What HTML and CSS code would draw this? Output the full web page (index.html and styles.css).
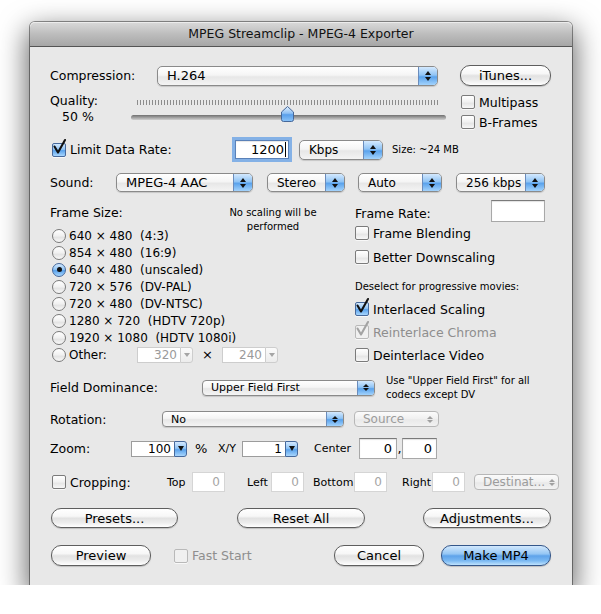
FILE: index.html
```html
<!DOCTYPE html>
<html>

<head>
  <meta charset="utf-8">
  <link rel="stylesheet" href="styles.css">
</head>

<body>
  <div class="window">
    <div class="titlebar">MPEG Streamclip - MPEG-4 Exporter</div>

    <div class="content">
      <!-- codec -->
      <div class="row r-compression">
        <span class="w-comp">Compression:</span>
        <div class="popup w-codec"><span class="popup-text big">H.264</span><span class="stepper"></span></div>
        <button class="btn w-itunes">iTunes...</button>
      </div>

      <!-- quality slider -->
      <div class="row r-quality">
        <div class="quality">
          <div>Quality:</div>
          <div class="quality-value">50 %</div>
        </div>
        <div class="slider">
          <div class="ticks"></div>
          <div class="track">
            <svg class="thumb" width="13" height="16" viewBox="0 0 13 16">
              <defs>
                <linearGradient id="thumbFill" x1="0" y1="0" x2="0" y2="1">
                  <stop offset="0" stop-color="#e2f0ff" />
                  <stop offset="0.45" stop-color="#8fc0f3" />
                  <stop offset="0.55" stop-color="#5a9fea" />
                  <stop offset="1" stop-color="#8cc4f8" />
                </linearGradient>
              </defs>
              <path d="M6.5 0.5 L12.5 6 V13.5 Q12.5 15.5 10.5 15.5 H2.5 Q0.5 15.5 0.5 13.5 V6 Z" fill="url(#thumbFill)"
                stroke="#46689a" />
            </svg>
          </div>
        </div>
        <div class="options">
          <label class="opt"><span class="check"></span>Multipass</label>
          <label class="opt"><span class="check"></span>B-Frames</label>
        </div>
      </div>

      <!-- data rate -->
      <div class="row r-limit">
        <label class="opt w-limit"><span class="check on"><svg class="tick" viewBox="0 0 14 16">
              <path d="M1.5 7.5 L5 13.5 L12 1" />
            </svg></span>Limit Data Rate:</label>
        <div class="field focus w-rate">1200<span class="caret"></span></div>
        <div class="popup w-units"><span class="popup-text">Kbps</span><span class="stepper"></span></div>
        <span class="small size-note">Size: ~24 MB</span>
      </div>

      <!-- audio -->
      <div class="row r-sound">
        <span class="w-sound">Sound:</span>
        <div class="popup md w-aac"><span class="popup-text big">MPEG-4 AAC</span><span class="stepper"></span></div>
        <div class="popup md w-stereo"><span class="popup-text">Stereo</span><span class="stepper"></span></div>
        <div class="popup md w-auto"><span class="popup-text">Auto</span><span class="stepper"></span></div>
        <div class="popup md w-bitrate"><span class="popup-text">256 kbps</span><span class="stepper"></span></div>
      </div>

      <!-- frame size / frame rate -->
      <div class="frames">
        <div class="frame-left">
          <div class="frame-head">
            <span class="w-framesize">Frame Size:</span>
            <span class="small scale-note">No scaling will be<br>performed</span>
          </div>
          <div class="radios">
            <label class="radio-row"><span class="radio"></span>640 × 480&nbsp; (4:3)</label>
            <label class="radio-row"><span class="radio"></span>854 × 480&nbsp; (16:9)</label>
            <label class="radio-row"><span class="radio on"></span>640 × 480&nbsp; (unscaled)</label>
            <label class="radio-row"><span class="radio"></span>720 × 576&nbsp; (DV-PAL)</label>
            <label class="radio-row"><span class="radio"></span>720 × 480&nbsp; (DV-NTSC)</label>
            <label class="radio-row"><span class="radio"></span>1280 × 720&nbsp; (HDTV 720p)</label>
            <label class="radio-row"><span class="radio"></span>1920 × 1080&nbsp; (HDTV 1080i)</label>
            <div class="radio-row">
              <span class="radio"></span><span class="w-other">Other:</span>
              <div class="combo dim w-dim"><span class="combo-text">320</span><span class="combo-btn"></span></div>
              <span class="times">×</span>
              <div class="combo dim w-dim"><span class="combo-text">240</span><span class="combo-btn"></span></div>
            </div>
          </div>
        </div>

        <div class="frame-right">
          <div class="rate-row">
            <span>Frame Rate:</span>
            <div class="field w-fps"></div>
          </div>
          <label class="opt gap-4"><span class="check"></span>Frame Blending</label>
          <label class="opt gap-10"><span class="check"></span>Better Downscaling</label>
          <div class="small deselect">Deselect for progressive movies:</div>
          <label class="opt gap-8"><span class="check on"><svg class="tick" viewBox="0 0 14 16">
                <path d="M1.5 7.5 L5 13.5 L12 1" />
              </svg></span>Interlaced Scaling</label>
          <label class="opt gap-9 disabled"><span class="check dim"><svg class="tick" viewBox="0 0 14 16">
                <path d="M1.5 7.5 L5 13.5 L12 1" />
              </svg></span>Reinterlace Chroma</label>
          <label class="opt gap-9"><span class="check"></span>Deinterlace Video</label>
        </div>
      </div>

      <!-- field order -->
      <div class="row r-field">
        <span class="w-dominance">Field Dominance:</span>
        <div class="popup sm w-order"><span class="popup-text">Upper Field First</span><span class="stepper"></span></div>
        <span class="small field-note">Use "Upper Field First" for all<br>codecs except DV</span>
      </div>

      <div class="row r-rotation">
        <span class="w-rotation">Rotation:</span>
        <div class="popup sm w-rotate"><span class="popup-text">No</span><span class="stepper"></span></div>
        <div class="popup sm dis w-source"><span class="popup-text">Source</span><span class="stepper"></span></div>
      </div>

      <div class="row r-zoom">
        <span class="w-zoom">Zoom:</span>
        <div class="combo w-combo"><span class="combo-text">100</span><span class="combo-btn"></span></div>
        <span class="w-pct">%</span>
        <span class="small-label w-xy">X/Y</span>
        <div class="combo w-combo"><span class="combo-text">1</span><span class="combo-btn"></span></div>
        <span class="small-label w-center">Center</span>
        <div class="field w-cx">0</div>
        <span class="comma">,</span>
        <div class="field w-cy">0</div>
      </div>

      <div class="row r-crop">
        <label class="opt w-crop"><span class="check"></span>Cropping:</label>
        <span class="small-label w-top">Top</span>
        <div class="field dim w-edge">0</div>
        <span class="small-label w-left">Left</span>
        <div class="field dim w-edge">0</div>
        <span class="small-label w-bottom">Bottom</span>
        <div class="field dim w-edge">0</div>
        <span class="small-label w-right">Right</span>
        <div class="field dim w-edge">0</div>
        <div class="popup sm dis w-dest"><span class="popup-text">Destinat...</span><span class="stepper"></span></div>
      </div>

      <!-- actions -->
      <div class="row r-buttons">
        <button class="btn w-presets">Presets...</button>
        <button class="btn w-reset">Reset All</button>
        <button class="btn w-adjust">Adjustments...</button>
      </div>

      <div class="row r-final">
        <button class="btn w-preview">Preview</button>
        <label class="opt disabled w-fast"><span class="check dim"></span>Fast Start</label>
        <button class="btn w-cancel">Cancel</button>
        <button class="btn default w-make">Make MP4</button>
      </div>
    </div>
  </div>
</body>

</html>
```

FILE: styles.css
```css
body {
  margin: 0;
  background: #ffffff;
  font-family: "DejaVu Sans", "Lucida Grande", sans-serif;
  font-size: 12.5px;
  color: #000000;
}

.window {
  width: 542px;
  height: 563px;
  margin: 22px 0 0 30px;
  background: #e8e8e8;
  border-radius: 5px 5px 0 0;
  box-shadow: 0 0 0 1px rgba(0, 0, 0, 0.4), 0 10px 28px 3px rgba(0, 0, 0, 0.6);
}

.titlebar {
  height: 24px;
  line-height: 24px;
  text-align: center;
  font-size: 12.5px;
  color: #111;
  border-radius: 5px 5px 0 0;
  border-bottom: 1px solid #545454;
  background: linear-gradient(#dadada, #bdbdbd 50%, #a6a6a6);
  box-shadow: inset 0 1px 0 #ececec;
}

.content {
  padding: 18px 0 0 20px;
}

.row {
  display: flex;
  align-items: center;
}

.small {
  font-size: 10px;
}

.small-label {
  font-size: 11px;
}

/* ---- controls ---- */

.btn {
  box-sizing: border-box;
  height: 20px;
  padding: 0;
  font: inherit;
  font-size: 13px;
  color: #000;
  border: 1px solid #5e5e5e;
  border-radius: 10px;
  background: linear-gradient(#ffffff, #f7f7f7 40%, #e2e2e2 52%, #ececec 75%, #ffffff);
  box-shadow: 0 1px 1px rgba(0, 0, 0, 0.18);
  flex: none;
}

.btn.default {
  border-color: #35578a;
  background: linear-gradient(#d2e8fd, #94c6f4 42%, #5ea3ea 52%, #7bb9f2 78%, #bfe3fe);
}

.popup {
  display: flex;
  box-sizing: border-box;
  height: 20px;
  border: 1px solid #8a8a8a;
  border-radius: 5px;
  background: linear-gradient(#ffffff, #f5f5f5 45%, #e7e7e7 55%, #f4f4f4);
  box-shadow: 0 1px 1px rgba(0, 0, 0, 0.15);
  overflow: hidden;
  flex: none;
}

.popup-text {
  flex: 1;
  display: flex;
  align-items: center;
  padding-left: 9px;
  white-space: nowrap;
  font-size: 12px;
}

.popup-text.big {
  font-size: 13px;
}

.stepper {
  width: 18px;
  border-left: 1px solid #6a8cbc;
  background: linear-gradient(#d4e9fe, #90c4f5 45%, #5aa2ec 55%, #a3d3fc);
  display: flex;
  flex-direction: column;
  align-items: center;
  justify-content: center;
  gap: 2px;
}

.stepper::before {
  content: "";
  border-left: 3px solid transparent;
  border-right: 3px solid transparent;
  border-bottom: 4px solid #111;
}

.stepper::after {
  content: "";
  border-left: 3px solid transparent;
  border-right: 3px solid transparent;
  border-top: 4px solid #111;
}

.popup.md {
  height: 19px;
}

.popup.sm {
  height: 16px;
  border-radius: 4px;
}

.popup.sm .popup-text {
  font-size: 11px;
  padding-left: 8px;
}

.popup.sm .stepper {
  width: 16px;
  gap: 1px;
}

.popup.sm .stepper::before {
  border-bottom-width: 3px;
}

.popup.sm .stepper::after {
  border-top-width: 3px;
}

.popup.dis {
  border-color: #b7b7b7;
  box-shadow: none;
  background: linear-gradient(#fbfbfb, #f0f0f0 50%, #e9e9e9 55%, #f2f2f2);
}

.popup.dis .popup-text {
  color: #9c9c9c;
  font-size: 12px;
}

.popup.dis .stepper {
  background: none;
  border-left: 0;
}

.popup.dis .stepper::before {
  border-bottom-color: #a0a0a0;
}

.popup.dis .stepper::after {
  border-top-color: #a0a0a0;
}

.check {
  box-sizing: border-box;
  width: 14px;
  height: 14px;
  flex: none;
  display: flex;
  border: 1px solid #7b7b7b;
  border-radius: 2px;
  background: linear-gradient(#ffffff, #f1f1f1 50%, #e6e6e6 60%, #f7f7f7);
  box-shadow: 0 1px 0 rgba(255, 255, 255, 0.7);
}

.check.on {
  border-color: #47699b;
  background: linear-gradient(#d4e9fe, #90c4f5 45%, #5aa2ec 55%, #a8d6fd);
}

.check.dim {
  border-color: #b9b9b9;
  background: #f0f0f0;
}

.tick {
  width: 14px;
  height: 16px;
  margin-top: -5px;
  flex: none;
  overflow: visible;
}

.tick path {
  fill: none;
  stroke: #111;
  stroke-width: 2.1;
  stroke-linecap: round;
  stroke-linejoin: round;
}

.check.dim .tick path {
  stroke: #a3a3a3;
}

.radio {
  box-sizing: border-box;
  width: 14px;
  height: 14px;
  flex: none;
  border-radius: 50%;
  border: 1px solid #7a7a7a;
  background: linear-gradient(#ffffff, #f0f0f0 50%, #e3e3e3 60%, #f8f8f8);
  display: flex;
  align-items: center;
  justify-content: center;
}

.radio.on {
  border-color: #47699b;
  background: linear-gradient(#d4e9fe, #90c4f5 45%, #5aa2ec 55%, #a8d6fd);
}

.radio.on::after {
  content: "";
  width: 5px;
  height: 5px;
  border-radius: 50%;
  background: #111;
}

.opt {
  display: flex;
  align-items: center;
  gap: 4px;
  height: 14px;
  white-space: nowrap;
}

.opt.disabled {
  color: #8e8e8e;
}

.field {
  box-sizing: border-box;
  flex: none;
  display: flex;
  align-items: center;
  justify-content: flex-end;
  padding-right: 4px;
  background: #ffffff;
  border: 1px solid #a8a8a8;
  border-top-color: #7a7a7a;
  box-shadow: inset 0 1px 1px rgba(0, 0, 0, 0.12);
  font-size: 13px;
}

.field.focus {
  box-shadow: 0 0 0 3px #84b1e6, inset 0 1px 1px rgba(0, 0, 0, 0.1);
  border-color: #5a81b8;
}

.field.dim {
  border-color: #d5d5d5;
  box-shadow: none;
  color: #a5a5a5;
  font-size: 12px;
}

.caret {
  width: 1px;
  height: 15px;
  margin-left: 1px;
  background: #000;
}

.combo {
  display: flex;
  height: 16px;
  flex: none;
}

.combo-text {
  flex: 1;
  box-sizing: border-box;
  text-align: right;
  padding-right: 3px;
  line-height: 14px;
  background: #fff;
  border: 1px solid #9c9c9c;
  border-right: 0;
}

.combo-btn {
  width: 13px;
  box-sizing: border-box;
  border: 1px solid #46699c;
  border-radius: 0 3px 3px 0;
  background: linear-gradient(#d4e9fe, #90c4f5 45%, #5aa2ec 55%, #a8d6fd);
  display: flex;
  align-items: center;
  justify-content: center;
}

.combo-btn::after {
  content: "";
  border-left: 3px solid transparent;
  border-right: 3px solid transparent;
  border-top: 5px solid #111;
}

.combo.dim .combo-text {
  color: #9a9a9a;
  border-color: #cdcdcd;
}

.combo.dim .combo-btn {
  border-color: #cdcdcd;
  background: linear-gradient(#fbfbfb, #ececec);
}

.combo.dim .combo-btn::after {
  border-top-color: #a5a5a5;
  border-top-width: 4px;
}

/* ---- rows ---- */

.r-compression {
  height: 21px;
}

.w-comp {
  width: 107px;
}

.w-codec {
  width: 281px;
}

.w-itunes {
  width: 91px;
  height: 21px;
  margin-left: 22px;
}

.r-quality {
  margin-top: 6px;
  height: 38px;
  align-items: flex-start;
}

.quality {
  width: 81px;
  padding-top: 1px;
  line-height: 16px;
}

.quality-value {
  padding-left: 12px;
}

.slider {
  width: 315px;
}

.ticks {
  height: 5px;
  margin: 8px 7px 0 6px;
  background: repeating-linear-gradient(to right, #8c8c8c 0 1px, transparent 1px 3px);
}

.track {
  position: relative;
  height: 5px;
  margin-top: 10px;
  border-radius: 3px;
  background: linear-gradient(#6f6f6f, #a9a9a9 60%, #cfcfcf);
}

.thumb {
  position: absolute;
  left: 150px;
  top: -9px;
}

.options {
  margin-left: 15px;
  padding-top: 3px;
  display: flex;
  flex-direction: column;
  gap: 6px;
}

.r-limit {
  margin-top: 8px;
  height: 23px;
}

.w-limit {
  box-sizing: border-box;
  width: 185px;
  padding-left: 2px;
}

.w-rate {
  width: 54px;
  height: 19px;
  padding-right: 2px;
}

.w-units {
  width: 84px;
  margin-left: 10px;
}

.size-note {
  margin-left: 9px;
}

.r-sound {
  margin-top: 12px;
  height: 19px;
}

.w-sound {
  width: 66px;
}

.w-aac {
  width: 137px;
}

.w-stereo {
  width: 78px;
  margin-left: 14px;
}

.w-auto {
  width: 84px;
  margin-left: 13px;
}

.w-bitrate {
  width: 89px;
  margin-left: 14px;
}

.frames {
  display: flex;
  margin-top: 8px;
}

.frame-left {
  width: 305px;
  padding-top: 6px;
}

.frame-head {
  display: flex;
  height: 21px;
  line-height: 14px;
}

.w-framesize {
  width: 150px;
}

.scale-note {
  width: 146px;
  text-align: center;
}

.radios {
  display: flex;
  flex-direction: column;
  font-size: 12px;
}

.radio-row {
  display: flex;
  align-items: center;
  gap: 3px;
  height: 17px;
  padding-left: 2px;
  white-space: nowrap;
}

.w-other {
  width: 65px;
}

.w-dim {
  width: 56px;
}

.times {
  width: 23px;
  text-align: center;
  font-size: 13px;
}

.frame-right {
  width: 190px;
}

.rate-row {
  display: flex;
  align-items: center;
  justify-content: space-between;
  height: 22px;
}

.rate-row span {
  padding-top: 4px;
}

.w-fps {
  width: 54px;
  height: 22px;
}

.gap-4 {
  margin-top: 4px;
}

.gap-8 {
  margin-top: 8px;
}

.gap-9 {
  margin-top: 9px;
}

.gap-10 {
  margin-top: 10px;
}

.deselect {
  margin-top: 16px;
  line-height: 14px;
  white-space: nowrap;
}

.r-field {
  margin-top: 16px;
  height: 17px;
}

.w-dominance {
  width: 152px;
}

.w-order {
  width: 173px;
}

.field-note {
  margin-left: 11px;
  line-height: 14px;
  white-space: nowrap;
}

.r-rotation {
  margin-top: 15px;
  height: 16px;
}

.w-rotation {
  width: 112px;
}

.w-rotate {
  width: 182px;
}

.w-source {
  width: 85px;
  margin-left: 10px;
}

.r-zoom {
  margin-top: 11px;
  height: 21px;
}

.w-zoom {
  width: 81px;
}

.w-combo {
  width: 56px;
  font-size: 12px;
}

.w-pct {
  width: 31px;
  padding-left: 8px;
  box-sizing: border-box;
  font-size: 13px;
}

.w-xy {
  width: 24px;
}

.w-center {
  width: 45px;
  margin-left: 16px;
}

.w-cx {
  width: 38px;
  height: 21px;
}

.comma {
  width: 5px;
  text-align: center;
  font-size: 13px;
}

.w-cy {
  width: 35px;
  height: 21px;
}

.r-crop {
  margin-top: 13px;
  height: 20px;
}

.w-crop {
  box-sizing: border-box;
  width: 117px;
  padding-left: 2px;
}

.w-top {
  width: 25px;
}

.w-edge {
  width: 33px;
  height: 20px;
}

.w-left {
  width: 24px;
  margin-left: 22px;
}

.w-bottom {
  width: 41px;
  margin-left: 9px;
}

.w-right {
  width: 30px;
  margin-left: 15px;
}

.w-dest {
  width: 85px;
  margin-left: 9px;
}

.r-buttons {
  margin-top: 16px;
  height: 20px;
}

.w-presets {
  width: 127px;
  margin-left: 1px;
}

.w-reset {
  width: 128px;
  margin-left: 59px;
}

.w-adjust {
  width: 128px;
  margin-left: 58px;
}

.r-final {
  margin-top: 17px;
  height: 21px;
}

.w-preview {
  width: 100px;
  height: 21px;
  margin-left: 1px;
}

.w-fast {
  width: 160px;
  margin-left: 23px;
}

.w-cancel {
  width: 90px;
  height: 21px;
}

.w-make {
  width: 110px;
  height: 21px;
  margin-left: 17px;
}
```
